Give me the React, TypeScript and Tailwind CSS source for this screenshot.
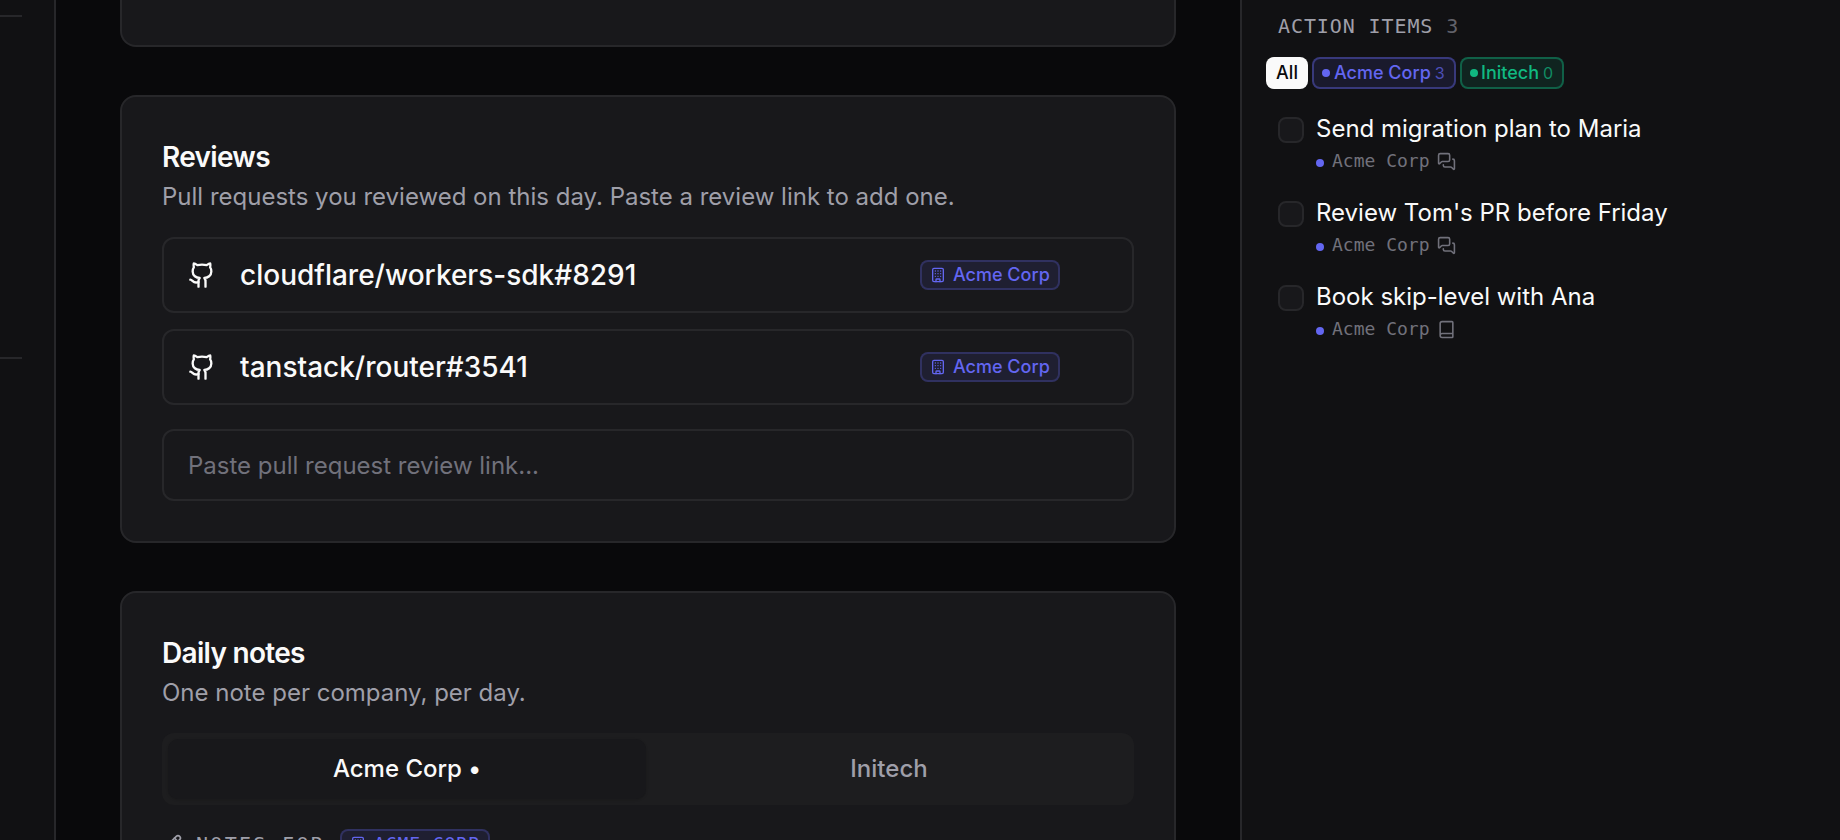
import React, { useState } from 'react';
import { Book, Building, Github, MessagesSquare, Pencil } from 'lucide-react';

type Source = 'chat' | 'note';

interface ActionItem {
    id: number;
    title: string;
    company: string;
    source: Source;
}

const reviews = ['cloudflare/workers-sdk#8291', 'tanstack/router#3541'];

const actionItems: ActionItem[] = [
    { id: 1, title: 'Send migration plan to Maria', company: 'Acme Corp', source: 'chat' },
    { id: 2, title: "Review Tom's PR before Friday", company: 'Acme Corp', source: 'chat' },
    { id: 3, title: 'Book skip-level with Ana', company: 'Acme Corp', source: 'note' },
];

const Card: React.FC<{ title: string; description: string; children: React.ReactNode }> = ({ title, description, children }) => (
    <section className="shrink-0 rounded-[16px] border-2 border-[#27272a] bg-[#18181b] p-10">
        <h2 className="text-[28px] leading-[40px] font-semibold tracking-[-0.025em] text-[#fafafa]">{title}</h2>
        <p className="mt-0.5 text-2xl leading-9 text-[#9f9fa9]">{description}</p>
        {children}
    </section>
);

const App: React.FC = () => {
    const [tab, setTab] = useState('Acme Corp');

    return (
        <div className="flex h-[840px] w-[1840px] overflow-hidden bg-[#09090b] font-['Inter',sans-serif] text-[#fafafa]">
            {/* Left rail */}
            <aside className="w-14 shrink-0 border-r-2 border-[#27272a] bg-[#111113] pt-[15px]">
                <div className="h-0.5 w-[22px] bg-[#27272a]" />
                <div className="mt-[340px] h-0.5 w-[22px] bg-[#27272a]" />
            </aside>

            <main className="flex w-[1184px] shrink-0 flex-col gap-12 overflow-hidden px-16">
                <div className="h-[47px] shrink-0 rounded-b-[16px] border-2 border-t-0 border-[#27272a] bg-[#18181b]" />

                <Card title="Reviews" description="Pull requests you reviewed on this day. Paste a review link to add one.">
                    <div className="mt-[22px] flex flex-col gap-4">
                        {reviews.map((name) => (
                            <div key={name} className="flex h-[76px] items-center rounded-[12px] border-2 border-[#27272a] pl-6 pr-[72px]">
                                <Github size={28} />
                                <span className="ml-6 flex-1 text-[28px] font-medium">{name}</span>
                                <span className="flex h-[30px] w-[140px] items-center gap-[7px] rounded-[8px] border-2 border-[#6366f1]/25 bg-[#6366f1]/10 pl-2 text-lg font-medium whitespace-nowrap text-[#6366f1]">
                                    <Building size={16} className="shrink-0" />
                                    Acme Corp
                                </span>
                            </div>
                        ))}
                    </div>
                    <input
                        type="text"
                        placeholder="Paste pull request review link..."
                        className="mt-6 block h-[72px] w-full rounded-[12px] border-2 border-[#27272a] px-6 text-2xl outline-none placeholder:text-[#71717b]"
                    />
                </Card>

                <Card title="Daily notes" description="One note per company, per day.">
                    <div className="mt-[22px] flex h-[72px] gap-1 rounded-[12px] bg-[#1d1d1f] p-1.5">
                        {['Acme Corp', 'Initech'].map((name) => (
                            <button
                                key={name}
                                onClick={() => setTab(name)}
                                className={`w-[478px] rounded-[10px] text-2xl font-medium ${tab === name ? 'bg-[#18181b] text-[#fafafa] shadow-sm' : 'text-[#9f9fa9]'}`}
                            >
                                {name}
                                {name === 'Acme Corp' && ' •'}
                            </button>
                        ))}
                    </div>
                    <div className="mt-6 flex items-center font-['DejaVu_Sans_Mono',monospace] text-xl tracking-[0.115em] whitespace-nowrap text-[#9f9fa9]">
                        <Pencil size={20} className="mr-[14px] shrink-0" />
                        NOTES FOR
                        <span className="ml-[15px] flex h-[30px] w-[150px] items-center gap-2 rounded-[8px] border-2 border-[#6366f1]/25 bg-[#6366f1]/10 pl-2 text-lg tracking-[0.05em] text-[#6366f1]">
                            <Building size={16} className="shrink-0" />
                            ACME CORP
                        </span>
                    </div>
                </Card>
            </main>

            {/* Action items */}
            <aside className="flex-1 border-l-2 border-[#27272a] bg-[#111113] pt-3">
                <h3 className="pl-9 font-['DejaVu_Sans_Mono',monospace] text-xl leading-7 tracking-[0.045em] text-[#9f9fa9]">
                    ACTION ITEMS <span className="text-[#62626a]">3</span>
                </h3>
                <div className="mt-[17px] flex gap-1 pl-6 text-lg font-medium">
                    <button className="h-8 w-[42px] rounded-[8px] bg-[#fafafa] text-[#09090b]">All</button>
                    <button className="flex h-8 w-[144px] items-center rounded-[8px] border-2 border-[#6366f1]/40 bg-[#6366f1]/12 pl-2 text-[#6366f1]">
                        <span className="mr-1 size-2 rounded-full bg-[#6366f1]" />
                        Acme Corp<span className="ml-1 text-base font-normal opacity-70">3</span>
                    </button>
                    <button className="flex h-8 w-[104px] items-center rounded-[8px] border-2 border-[#10b981]/40 bg-[#10b981]/12 pl-2 text-[#10b981]">
                        <span className="mr-[3px] size-2 rounded-full bg-[#10b981]" />
                        Initech<span className="ml-1 text-base font-normal opacity-70">0</span>
                    </button>
                </div>
                <ul className="mt-5 pl-9">
                    {actionItems.map((item) => (
                        <li key={item.id} className="flex h-[84px] gap-3">
                            <span className="mt-2 size-[26px] rounded-[8px] border-2 border-[#27272a] bg-[#18181b]" />
                            <div>
                                <p className="text-2xl leading-[40px]">{item.title}</p>
                                <div className="flex h-6 items-center font-['DejaVu_Sans_Mono',monospace] text-lg text-[#71717b]">
                                    <span className="mr-2 mt-1 size-2 rounded-full bg-[#6366f1]" />
                                    {item.company}
                                    {item.source === 'chat' ? <MessagesSquare size={19} className="ml-[7px]" /> : <Book size={19} className="ml-[7px]" />}
                                </div>
                            </div>
                        </li>
                    ))}
                </ul>
            </aside>
        </div>
    );
};

export default App;
